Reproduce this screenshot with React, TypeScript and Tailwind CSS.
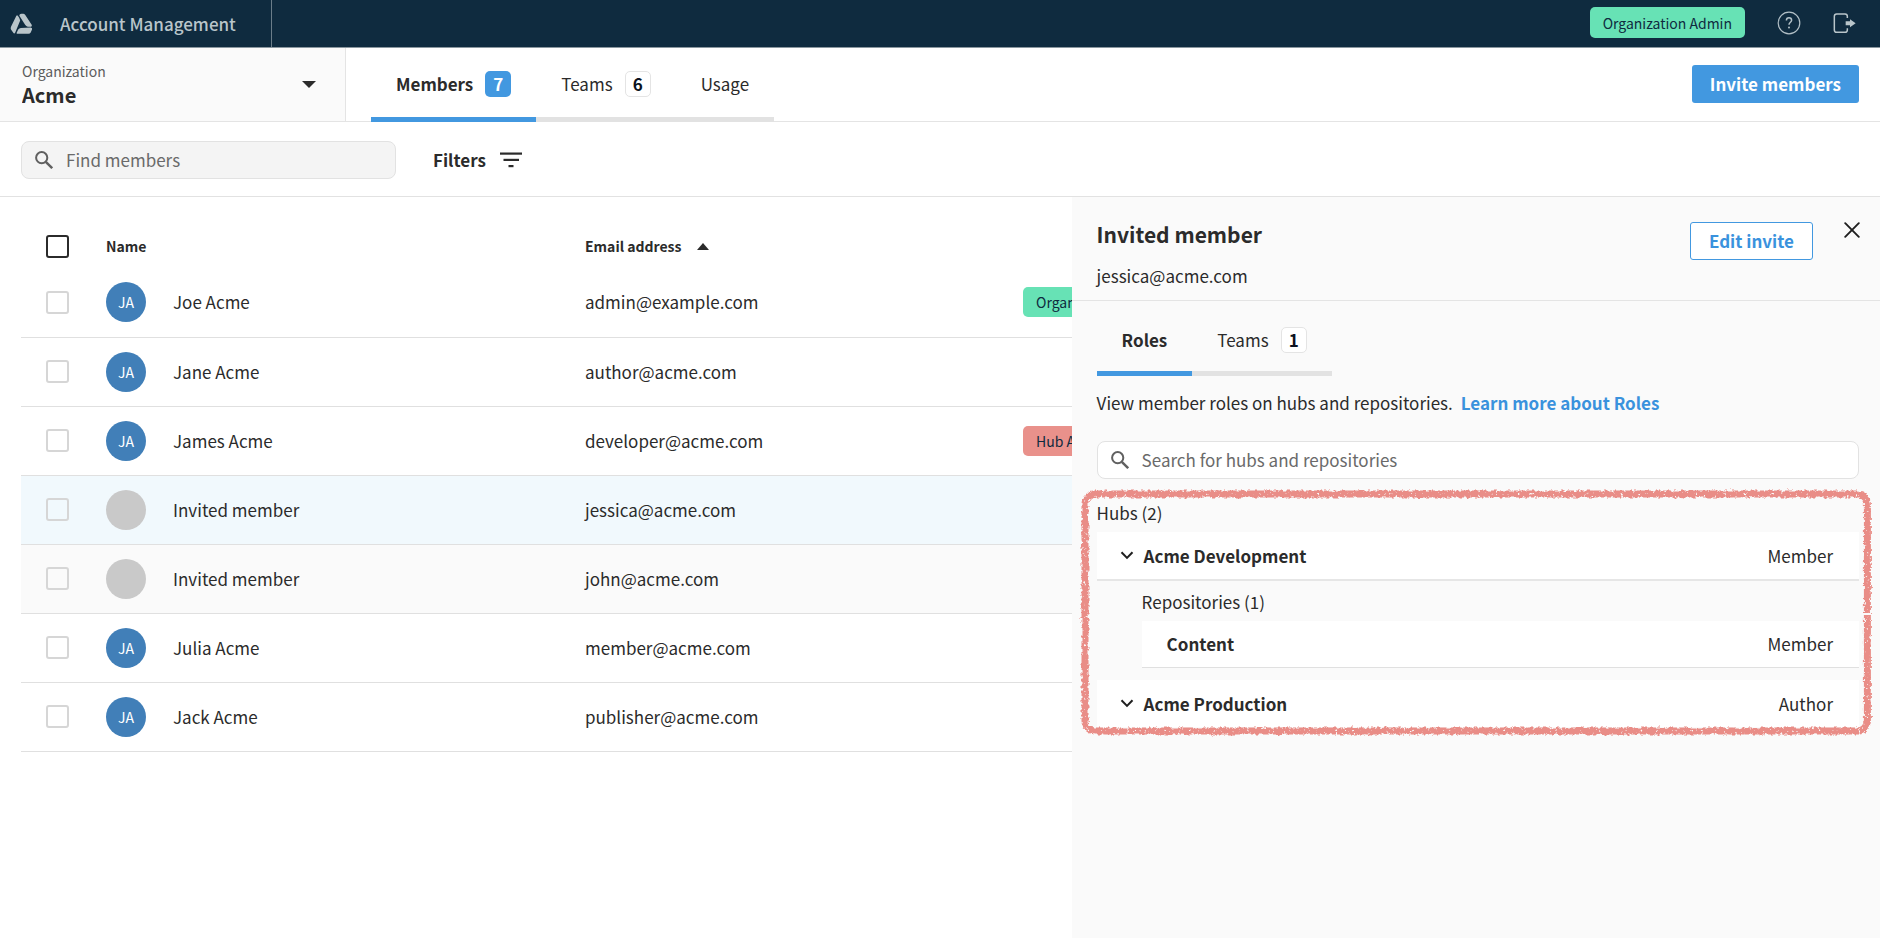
import React from "react";

type Role = { label: string; tone: string };

type Member = {
  id: number;
  name: string;
  email: string;
  initials?: string;
  role?: Role;
  row: string;
};

const members: Member[] = [
  {
    id: 1,
    name: "Joe Acme",
    email: "admin@example.com",
    initials: "JA",
    role: { label: "Organization Admin", tone: "bg-[#67e2b5]" },
    row: "",
  },
  { id: 2, name: "Jane Acme", email: "author@acme.com", initials: "JA", row: "" },
  {
    id: 3,
    name: "James Acme",
    email: "developer@acme.com",
    initials: "JA",
    role: { label: "Hub Admin", tone: "bg-[#e9918b]" },
    row: "",
  },
  { id: 4, name: "Invited member", email: "jessica@acme.com", row: "bg-[#f1f9fd]" },
  { id: 5, name: "Invited member", email: "john@acme.com", row: "bg-[#fafafa]" },
  { id: 6, name: "Julia Acme", email: "member@acme.com", initials: "JA", row: "" },
  { id: 7, name: "Jack Acme", email: "publisher@acme.com", initials: "JA", row: "" },
];

function Logo() {
  return (
    <svg viewBox="28 34 70 66" className="h-[22px] w-[23px]" fill="#b9c5ca" aria-hidden="true">
      <path d="M50 40Q54 43 56 48L59 56L44 93Q41 99 38 94L31 84Q29 80 31 75L47 43Q48 40 50 40Z" />
      <path d="M57 39Q59 36 63 36L69 36Q73 37 75 40L94 69Q96 74 92 75L82 75Q77 74 74 69L57 43Q56 41 57 39Z" />
      <path d="M61 79L91 78Q97 79 95 84L91 93Q89 97 84 97L52 97Q46 97 49 92L53 84Q56 79 61 79Z" />
    </svg>
  );
}

function HelpIcon() {
  return (
    <svg viewBox="0 0 24 24" className="size-6" fill="none" stroke="#b3c0c7" aria-hidden="true">
      <circle cx="12" cy="12" r="10.8" strokeWidth="1.2" />
      <path d="M9.4 9.4C9.4 7.7 10.5 6.8 12 6.8C13.6 6.8 14.6 7.8 14.6 9.2C14.6 11.2 12 11.4 12 13.8" strokeWidth="1.5" />
      <circle cx="12" cy="16.6" r="1" fill="#b3c0c7" stroke="none" />
    </svg>
  );
}

function LogoutIcon() {
  return (
    <svg viewBox="219 34 69 66" className="h-[22px] w-[23px]" aria-hidden="true">
      <path d="M262 52V47Q262 40 255 40H230Q223 40 223 47V88Q223 95 230 95H255Q262 95 262 88V83" fill="none" stroke="#b9c5ca" strokeWidth="4.5" />
      <path d="M257 62H270V56L287 68L270 80V74H257Z" fill="#b9c5ca" />
    </svg>
  );
}

function SearchIcon() {
  return (
    <svg viewBox="0 0 18 18" className="size-[18px] shrink-0" fill="none" stroke="#606060" strokeWidth="2" aria-hidden="true">
      <circle cx="6.7" cy="6.7" r="5.6" />
      <path d="M10.8 10.8L17.2 17.2" strokeWidth="2.4" />
    </svg>
  );
}

function ChevronDown() {
  return (
    <svg viewBox="0 0 14 9" className="h-[9px] w-[14px] shrink-0" fill="none" stroke="#1f1f1f" strokeWidth="2" aria-hidden="true">
      <path d="M1.5 1.2L7 6.9L12.5 1.2" />
    </svg>
  );
}

function Check({ label, strong = false }: { label: string; strong?: boolean }) {
  return (
    <input
      type="checkbox"
      aria-label={label}
      className={
        strong
          ? "block size-[23px] appearance-none rounded-[3px] border-2 border-[#2b2b2b] bg-white checked:bg-[#2b2b2b]"
          : "block size-[23px] appearance-none rounded-[3px] border-2 border-[#d6d6d6] checked:bg-[#4298e0]"
      }
    />
  );
}

function Count({ value, active = false }: { value: number; active?: boolean }) {
  return (
    <span
      className={
        active
          ? "flex size-[26px] items-center justify-center rounded-[5px] bg-[#4298e0] font-bold text-white"
          : "flex size-[26px] items-center justify-center rounded-[5px] border border-[#e4e4e4] bg-white font-bold text-[#0b1220]"
      }
    >
      {value}
    </span>
  );
}

function Tab({ label, count, active = false }: { label: string; count?: number; active?: boolean }) {
  return (
    <button
      type="button"
      role="tab"
      aria-selected={active}
      className={
        active
          ? "flex items-center gap-3 border-b-5 border-[#4298e0] px-[25px] pt-[3px] font-bold"
          : "flex items-center gap-3 border-b-5 border-[#e2e2e2] px-[25px] pt-[3px]"
      }
    >
      {label}
      {count !== undefined && <Count value={count} active={active} />}
    </button>
  );
}

function TopBar() {
  return (
    <header className="flex h-12 items-stretch border-b border-[#8a979f] bg-[#0f2b3f] text-[#b9c5ca]">
      <a href="#home" className="flex items-center gap-[27px] border-r border-[#6b7d89] pr-[35px] pl-[10px] font-medium">
        <Logo />
        Account Management
      </a>
      <div className="ml-auto flex items-center pr-6 pb-[2px]">
        <span className="flex h-[31px] items-center rounded-[5px] bg-[#67e2b5] px-[13px] text-sm text-[#0f2b3f]">
          Organization Admin
        </span>
        <button type="button" aria-label="Help" className="ml-8">
          <HelpIcon />
        </button>
        <button type="button" aria-label="Log out" className="ml-8">
          <LogoutIcon />
        </button>
      </div>
    </header>
  );
}

function OrganizationBar() {
  return (
    <div className="flex h-[74px] items-stretch border-b border-[#e4e4e4]">
      <div className="flex w-[346px] items-center border-r border-[#e4e4e4] bg-[#fafafa] pr-[29px] pl-[22px]">
        <div className="flex flex-1 flex-col">
          <label htmlFor="organization" className="text-sm text-[#5c5c5c]">
            Organization
          </label>
          <select id="organization" className="w-full appearance-none bg-transparent text-xl/7 font-bold">
            <option>Acme</option>
          </select>
        </div>
        <svg viewBox="0 0 14 7" className="h-[7px] w-[14px]" fill="#2b2b2b" aria-hidden="true">
          <path d="M0 0H14L7 7Z" />
        </svg>
      </div>
      <div role="tablist" className="-mb-px ml-[25px] flex">
        <Tab label="Members" count={7} active />
        <Tab label="Teams" count={6} />
        <Tab label="Usage" />
      </div>
      <button
        type="button"
        className="mr-[21px] mb-[2px] ml-auto h-[38px] self-center rounded-[3px] bg-[#4298e0] px-[18px] font-bold text-white"
      >
        Invite members
      </button>
    </div>
  );
}

function FilterBar() {
  return (
    <div className="flex h-[75px] items-center border-b border-[#e2e2e2] pt-px pl-[21px]">
      <label className="flex h-[38px] w-[375px] items-center gap-[13px] rounded-lg border border-[#e2e2e2] bg-[#f4f4f4] px-[13px]">
        <SearchIcon />
        <input
          type="search"
          aria-label="Find members"
          placeholder="Find members"
          className="min-w-0 flex-1 bg-transparent outline-none placeholder:text-[#6a6a6a]"
        />
      </label>
      <button type="button" className="ml-[37px] flex items-center gap-[14px] font-bold">
        Filters
        <svg viewBox="0 0 22 16" className="h-4 w-[22px]" fill="#2b2b2b" aria-hidden="true">
          <rect x="0" y="0.5" width="22" height="2.2" />
          <rect x="3.5" y="6.8" width="15.5" height="2.2" />
          <rect x="8.5" y="13" width="5" height="2.2" />
        </svg>
      </button>
    </div>
  );
}

function MembersTable() {
  return (
    <table className="ml-[21px] w-[1838px] table-fixed border-collapse text-left">
      <thead>
        <tr className="h-11 text-sm">
          <th className="w-[85px] pl-[25px]">
            <Check label="Select all members" strong />
          </th>
          <th className="w-[479px] p-0 font-bold">Name</th>
          <th className="w-[438px] p-0 font-bold">
            <button type="button" className="flex items-center gap-4">
              Email address
              <svg viewBox="0 0 12 7" className="h-[7px] w-3" fill="#2b2b2b" aria-hidden="true">
                <path d="M0 7H12L6 0Z" />
              </svg>
            </button>
          </th>
          <th className="p-0" aria-label="Role" />
        </tr>
      </thead>
      <tbody>
        {members.map((m) => (
          <tr key={m.id} className={`h-[69px] border-b border-[#e0e0e0] ${m.row}`}>
            <td className="pl-[25px]">
              <Check label={`Select ${m.name}, ${m.email}`} />
            </td>
            <td className="p-0">
              <div className="flex items-center gap-[27px]">
                <span
                  className={
                    m.initials
                      ? "flex size-10 items-center justify-center rounded-full bg-[#417fb8] text-sm text-white"
                      : "size-10 rounded-full bg-[#c9c9c9]"
                  }
                >
                  {m.initials}
                </span>
                {m.name}
              </div>
            </td>
            <td className="p-0">{m.email}</td>
            <td className="p-0">
              {m.role && (
                <span
                  className={`flex h-[30px] w-[157px] items-center rounded-[5px] px-[13px] text-sm whitespace-nowrap text-[#0f2b3f] ${m.role.tone}`}
                >
                  {m.role.label}
                </span>
              )}
            </td>
          </tr>
        ))}
      </tbody>
    </table>
  );
}

/** Crayon-like outline drawn over the hub list. */
function SketchOutline() {
  return (
    <div className="pointer-events-none absolute -top-[7px] -right-3 -bottom-2 -left-4" aria-hidden="true">
      <svg className="size-full overflow-visible">
        <filter id="crayon" filterUnits="userSpaceOnUse" x="-10" y="-10" width="110%" height="120%">
          <feTurbulence type="fractalNoise" baseFrequency="0.3" numOctaves="3" seed="4" result="noise" />
          <feDisplacementMap in="SourceGraphic" in2="noise" scale="5" xChannelSelector="R" yChannelSelector="G" result="rough" />
          <feTurbulence type="fractalNoise" baseFrequency="0.35" numOctaves="2" seed="9" result="grain" />
          <feColorMatrix in="grain" type="matrix" values="0 0 0 0 0  0 0 0 0 0  0 0 0 0 0  0 0 0 -7 5.6" result="mask" />
          <feComposite in="rough" in2="mask" operator="in" result="stroke" />
          <feGaussianBlur in="stroke" stdDeviation="0.35" />
        </filter>
        <rect
          style={{ x: "4px", y: "4px", width: "calc(100% - 8px)", height: "calc(100% - 8px)" } as React.CSSProperties}
          rx="10"
          fill="none"
          stroke="#e98d87"
          strokeWidth="7"
          filter="url(#crayon)"
        />
      </svg>
      <span className="absolute top-1/2 right-0 h-[2px] w-2 bg-[#fafafa]" />
    </div>
  );
}

function HubRow({ name, role }: { name: string; role: string }) {
  return (
    <div className="flex h-[47px] items-center bg-white pr-[26px] pl-[23px]">
      <button type="button" aria-expanded="true" className="flex items-center gap-[10px] font-bold">
        <ChevronDown />
        {name}
      </button>
      <span className="ml-auto">{role}</span>
    </div>
  );
}

function MemberPanel() {
  return (
    <aside className="w-[43%] shrink-0 bg-[#fafafa]">
      <div className="flex h-[104px] items-start border-b border-[#e4e4e4] pt-[25px] pr-5 pl-[25px]">
        <div>
          <h2 className="text-[21px]/6 font-bold">Invited member</h2>
          <p className="mt-[18px]">jessica@acme.com</p>
        </div>
        <button
          type="button"
          className="ml-auto h-[38px] rounded-[3px] border border-[#4298e0] bg-white px-[18px] font-bold text-[#3a92dd]"
        >
          Edit invite
        </button>
        <button type="button" aria-label="Close" className="ml-[31px]">
          <svg viewBox="0 0 16 16" className="size-4" stroke="#1f1f1f" strokeWidth="1.9" strokeLinecap="round" aria-hidden="true">
            <path d="M1.2 1.2L14.8 14.8M14.8 1.2L1.2 14.8" />
          </svg>
        </button>
      </div>

      <div className="pr-[21px] pl-[25px]">
        <div role="tablist" className="mt-1 flex h-[71px]">
          <Tab label="Roles" active />
          <Tab label="Teams" count={1} />
        </div>

        <p className="mt-[15px]">
          View member roles on hubs and repositories.
          <a href="#roles" className="ml-2 font-bold text-[#3a92dd]">
            Learn more about Roles
          </a>
        </p>

        <label className="mt-[26px] flex h-[38px] items-center gap-[13px] rounded-lg border border-[#e2e2e2] bg-white px-[13px]">
          <SearchIcon />
          <input
            type="search"
            aria-label="Search for hubs and repositories"
            placeholder="Search for hubs and repositories"
            className="min-w-0 flex-1 bg-transparent outline-none placeholder:text-[#6a6a6a]"
          />
        </label>

        <section className="relative mt-[18px]">
          <h3 className="h-[35px] pt-1">Hubs (2)</h3>
          <div className="border-b-2 border-[#e6e6e6]">
            <HubRow name="Acme Development" role="Member" />
          </div>
          <div className="pb-3 pl-[45px]">
            <h4 className="h-10 pt-[9px]">Repositories (1)</h4>
            <div className="flex h-[47px] items-center border-b border-[#e0e0e0] bg-white pr-[26px] pl-[25px]">
              <span className="font-bold">Content</span>
              <span className="ml-auto">Member</span>
            </div>
          </div>
          <HubRow name="Acme Production" role="Author" />
          <SketchOutline />
        </section>
      </div>
    </aside>
  );
}

export default function App() {
  return (
    <div className="flex min-h-screen flex-col bg-white font-['Noto_Sans_CJK_JP',sans-serif] text-[17px]/6 text-[#2b2b2b]">
      <TopBar />
      <OrganizationBar />
      <FilterBar />
      <main className="flex flex-1 items-stretch">
        <div className="min-w-0 flex-1 overflow-hidden pt-[27px]">
          <MembersTable />
        </div>
        <MemberPanel />
      </main>
    </div>
  );
}
